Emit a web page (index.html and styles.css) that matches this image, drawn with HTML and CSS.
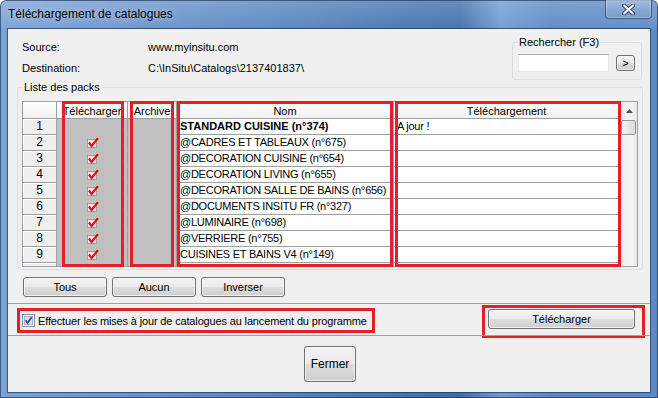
FILE: index.html
```html
<!DOCTYPE html>
<html lang="fr">
<head>
  <meta charset="UTF-8">
  <title>Téléchargement de catalogues</title>
  <link rel="stylesheet" href="styles.css">
</head>
<body>
  <div class="window">
    <div class="titlebar">
      <span class="title">Téléchargement de catalogues</span>
      <div class="close">
        <svg width="13" height="11" viewBox="0 0 13 11">
          <path d="M2 1.5 L11 9.5 M11 1.5 L2 9.5" stroke="#2b3f5c" stroke-width="4" stroke-linecap="round"/>
          <path d="M2 1.5 L11 9.5 M11 1.5 L2 9.5" stroke="#ffffff" stroke-width="2.2" stroke-linecap="round"/>
        </svg>
      </div>
    </div>

    <div class="client">
      <div class="top">
        <div class="info">
          <div class="info-row"><span class="label">Source:</span><span>www.myinsitu.com</span></div>
          <div class="info-row"><span class="label">Destination:</span><span>C:\InSitu\Catalogs\2137401837\</span></div>
        </div>
        <fieldset class="group search">
          <legend>Rechercher (F3)</legend>
          <input class="search-input" type="text">
          <button class="btn go">&gt;</button>
        </fieldset>
      </div>

      <fieldset class="group packs">
        <legend>Liste des packs</legend>
        <div class="grid-wrap">
          <div class="grid">
            <div class="cell head corner"></div>
            <div class="cell head">Télécharger</div>
            <div class="cell head">Archive</div>
            <div class="cell head">Nom</div>
            <div class="cell head">Téléchargement</div>

            <div class="cell rh">1</div>
            <div class="cell dl"></div>
            <div class="cell ar"></div>
            <div class="cell nm bold">STANDARD CUISINE (n°374)</div>
            <div class="cell st">A jour !</div>

            <div class="cell rh">2</div>
            <div class="cell dl"><svg class="tick" width="12" height="11" viewBox="0 0 12 11"><rect x="0.5" y="2.5" width="9" height="8" fill="#f2e6e6" stroke="#a89a9a"/><path d="M2 5.5 L4.6 9 L11 1.2" fill="none" stroke="#d4131b" stroke-width="2.2"/></svg></div>
            <div class="cell ar"></div>
            <div class="cell nm">@CADRES ET TABLEAUX (n°675)</div>
            <div class="cell st"></div>

            <div class="cell rh">3</div>
            <div class="cell dl"><svg class="tick" width="12" height="11" viewBox="0 0 12 11"><rect x="0.5" y="2.5" width="9" height="8" fill="#f2e6e6" stroke="#a89a9a"/><path d="M2 5.5 L4.6 9 L11 1.2" fill="none" stroke="#d4131b" stroke-width="2.2"/></svg></div>
            <div class="cell ar"></div>
            <div class="cell nm">@DECORATION CUISINE (n°654)</div>
            <div class="cell st"></div>

            <div class="cell rh">4</div>
            <div class="cell dl"><svg class="tick" width="12" height="11" viewBox="0 0 12 11"><rect x="0.5" y="2.5" width="9" height="8" fill="#f2e6e6" stroke="#a89a9a"/><path d="M2 5.5 L4.6 9 L11 1.2" fill="none" stroke="#d4131b" stroke-width="2.2"/></svg></div>
            <div class="cell ar"></div>
            <div class="cell nm">@DECORATION LIVING (n°655)</div>
            <div class="cell st"></div>

            <div class="cell rh">5</div>
            <div class="cell dl"><svg class="tick" width="12" height="11" viewBox="0 0 12 11"><rect x="0.5" y="2.5" width="9" height="8" fill="#f2e6e6" stroke="#a89a9a"/><path d="M2 5.5 L4.6 9 L11 1.2" fill="none" stroke="#d4131b" stroke-width="2.2"/></svg></div>
            <div class="cell ar"></div>
            <div class="cell nm">@DECORATION SALLE DE BAINS (n°656)</div>
            <div class="cell st"></div>

            <div class="cell rh">6</div>
            <div class="cell dl"><svg class="tick" width="12" height="11" viewBox="0 0 12 11"><rect x="0.5" y="2.5" width="9" height="8" fill="#f2e6e6" stroke="#a89a9a"/><path d="M2 5.5 L4.6 9 L11 1.2" fill="none" stroke="#d4131b" stroke-width="2.2"/></svg></div>
            <div class="cell ar"></div>
            <div class="cell nm">@DOCUMENTS INSITU FR (n°327)</div>
            <div class="cell st"></div>

            <div class="cell rh">7</div>
            <div class="cell dl"><svg class="tick" width="12" height="11" viewBox="0 0 12 11"><rect x="0.5" y="2.5" width="9" height="8" fill="#f2e6e6" stroke="#a89a9a"/><path d="M2 5.5 L4.6 9 L11 1.2" fill="none" stroke="#d4131b" stroke-width="2.2"/></svg></div>
            <div class="cell ar"></div>
            <div class="cell nm">@LUMINAIRE (n°698)</div>
            <div class="cell st"></div>

            <div class="cell rh">8</div>
            <div class="cell dl"><svg class="tick" width="12" height="11" viewBox="0 0 12 11"><rect x="0.5" y="2.5" width="9" height="8" fill="#f2e6e6" stroke="#a89a9a"/><path d="M2 5.5 L4.6 9 L11 1.2" fill="none" stroke="#d4131b" stroke-width="2.2"/></svg></div>
            <div class="cell ar"></div>
            <div class="cell nm">@VERRIERE (n°755)</div>
            <div class="cell st"></div>

            <div class="cell rh">9</div>
            <div class="cell dl"><svg class="tick" width="12" height="11" viewBox="0 0 12 11"><rect x="0.5" y="2.5" width="9" height="8" fill="#f2e6e6" stroke="#a89a9a"/><path d="M2 5.5 L4.6 9 L11 1.2" fill="none" stroke="#d4131b" stroke-width="2.2"/></svg></div>
            <div class="cell ar"></div>
            <div class="cell nm">CUISINES ET BAINS V4 (n°149)</div>
            <div class="cell st"></div>

            <div class="cell rh"></div>
            <div class="cell dl"></div>
            <div class="cell ar"></div>
            <div class="cell nm"></div>
            <div class="cell st"></div>
          </div>
          <div class="scrollbar">
            <div class="sb-up">
              <svg width="7" height="4" viewBox="0 0 7 4"><path d="M0 4 L3.5 0 L7 4 Z" fill="#555"/></svg>
            </div>
            <div class="sb-thumb"></div>
          </div>

          <!-- red annotation frames -->
          <div class="mark col-dl"></div>
          <div class="mark col-ar"></div>
          <div class="mark col-nm"></div>
          <div class="mark col-st"></div>
        </div>
      </fieldset>

      <div class="actions">
        <button class="btn sel">Tous</button>
        <button class="btn sel">Aucun</button>
        <button class="btn sel">Inverser</button>
      </div>

      <div class="panel">
        <label class="frame auto-update">
          <svg class="checkbox" width="13" height="13" viewBox="0 0 13 13">
            <rect x="0.5" y="0.5" width="12" height="12" fill="#f6f6f6" stroke="#8e8f8f"/>
            <rect x="2.5" y="2.5" width="8" height="8" fill="#dbe6f3" stroke="#a4b3c8"/>
            <path d="M3.5 6.3 L5.6 9 L9.6 3.3" fill="none" stroke="#2d4a86" stroke-width="1.7"/>
          </svg>
          <span>Effectuer les mises à jour de catalogues au lancement du programme</span>
        </label>
        <div class="frame download">
          <button class="btn wide">Télécharger</button>
        </div>
      </div>

      <div class="footer">
        <button class="btn closing">Fermer</button>
      </div>
    </div>
  </div>
</body>
</html>
```

FILE: styles.css
```css
* {
  box-sizing: border-box;
}

body {
  margin: 0;
  background: #ffffff;
  font-family: "Liberation Sans", Arial, sans-serif;
  font-size: 11px;
  color: #000000;
}

.window {
  width: 658px;
  height: 398px;
  display: flex;
  flex-direction: column;
  border-radius: 6px 6px 0 0;
  overflow: hidden;
  background:
    linear-gradient(180deg, rgba(255, 255, 255, 0.22) 0, rgba(255, 255, 255, 0.06) 28px, rgba(255, 255, 255, 0) 29px),
    linear-gradient(90deg, #7aa2d6 0%, #6b95cc 18%, #5886c1 40%, #4472ae 62%, #3f6da9 70%, #6d9ad0 76%, #5a88c3 84%, #5d8ac4 100%);
  box-shadow: inset 0 0 0 1px rgba(20, 40, 70, 0.6);
}

.titlebar {
  height: 29px;
  display: flex;
  align-items: flex-start;
  padding-left: 8px;
}

.title {
  font-size: 12px;
  line-height: 29px;
  text-shadow: 0 0 6px rgba(255, 255, 255, 0.6);
}

.close {
  margin-left: auto;
  margin-right: 6px;
  width: 47px;
  height: 19px;
  display: flex;
  align-items: center;
  justify-content: center;
  border: 1px solid rgba(25, 45, 75, 0.65);
  border-top: none;
  border-radius: 0 0 4px 4px;
  background: linear-gradient(180deg, rgba(255, 255, 255, 0.3), rgba(255, 255, 255, 0.12) 50%, rgba(255, 255, 255, 0.05));
  box-shadow: inset 0 0 0 1px rgba(255, 255, 255, 0.3);
}

.client {
  flex: 1;
  margin: 0 8px 6px 8px;
  background: #f0f0f0;
  display: flex;
  flex-direction: column;
  box-shadow: 0 0 0 1px rgba(30, 55, 90, 0.7);
}

/* top: source / destination + search */
.top {
  height: 52px;
  display: flex;
  align-items: flex-start;
}

.info {
  padding: 8px 0 0 14px;
}

.info-row {
  display: flex;
  height: 21px;
  line-height: 21px;
}

.label {
  width: 126px;
}

.group {
  margin: 0;
  border: 1px solid #d5dfe5;
  border-radius: 3px;
  min-width: 0;
}

.group legend {
  padding: 0 1px;
  line-height: 13px;
  font-size: 11px;
}

.search {
  margin: 7px 8px 0 auto;
  width: 130px;
  padding: 5px 6px 7px 5px;
  display: flex;
  align-items: center;
}

.search-input {
  width: 91px;
  height: 18px;
  margin: 0;
  border: 1px solid #e3e9ef;
  border-top-color: #abadb3;
  background: #ffffff;
  padding: 0;
}

.btn {
  font-family: "Liberation Sans", Arial, sans-serif;
  font-size: 11px;
  color: #000000;
  padding: 0;
  border: 1px solid #707070;
  border-radius: 3px;
  background: linear-gradient(180deg, #f2f2f2 0%, #ebebeb 49%, #dddddd 50%, #cfcfcf 100%);
  box-shadow: inset 0 0 0 1px rgba(255, 255, 255, 0.65);
}

.go {
  width: 19px;
  height: 16px;
  margin-left: 7px;
  line-height: 12px;
}

/* packs list */
.packs {
  margin: 0 7px 0 9px;
  padding: 7px 4px 2px 4px;
}

.packs legend {
  padding: 0 2px;
}

.grid-wrap {
  position: relative;
  display: flex;
  width: 616px;
  height: 166px;
  border: 1px solid #a0a0a0;
  background: #ababab;
}

.grid {
  display: grid;
  grid-template-columns: 34px 71px 49px 217px 226px;
  grid-auto-rows: 16px;
  grid-template-rows: 17px;
  height: 164px;
  overflow: hidden;
}

.cell {
  border-right: 1px solid #a0a0a0;
  border-bottom: 1px solid #a0a0a0;
  line-height: 15px;
  white-space: nowrap;
  overflow: hidden;
}

.head {
  background: linear-gradient(180deg, #ffffff, #f2f2f2);
  text-align: center;
  line-height: 18px;
}

.rh {
  background: #f0f0f0;
  text-align: center;
  font-size: 12px;
  box-shadow: inset 1px 1px 0 #ffffff;
}

.dl,
.ar {
  background: #c0c0c0;
  border-bottom-color: #c0c0c0;
}

.dl {
  display: flex;
  align-items: center;
  justify-content: center;
}

.tick {
  margin-left: 2px;
}

.nm,
.st {
  background: #ffffff;
  padding-left: 3px;
  letter-spacing: -0.25px;
}

.nm.bold {
  font-weight: bold;
  letter-spacing: 0;
}

.st {
  border-right: none;
}

.scrollbar {
  width: 17px;
  display: flex;
  flex-direction: column;
  border-left: 1px solid #e6e6e6;
  background: linear-gradient(90deg, #e4e4e4, #f3f3f3 25%, #f3f3f3 75%, #e4e4e4);
}

.sb-up {
  height: 17px;
  display: flex;
  align-items: center;
  justify-content: center;
}

.sb-thumb {
  height: 15px;
  margin: 1px 1px 0 0;
  border: 1px solid #979797;
  border-radius: 2px;
  background: linear-gradient(90deg, #f5f5f5, #e6e6e6 50%, #d9d9d9);
}

.mark {
  position: absolute;
  top: -1px;
  height: 166px;
  border: 3px solid #e3202a;
}

.col-dl {
  left: 39px;
  width: 62px;
}

.col-ar {
  left: 107px;
  width: 44px;
}

.col-nm {
  left: 154px;
  width: 216px;
}

.col-st {
  left: 372px;
  width: 226px;
}

/* select buttons */
.actions {
  display: flex;
  gap: 5px;
  margin: 7px 0 6px 15px;
}

.sel {
  width: 84px;
  height: 20px;
}

/* auto update + download */
.panel {
  height: 32px;
  display: flex;
  align-items: flex-start;
  border-top: 1px solid #a0a0a0;
}

.frame {
  border: 3px solid #e3202a;
}

.auto-update {
  display: flex;
  align-items: center;
  gap: 3px;
  width: 358px;
  height: 25px;
  margin: 4px 0 0 9px;
  padding-left: 2px;
  letter-spacing: -0.15px;
}

.download {
  width: 163px;
  height: 33px;
  margin: 1px 5px 0 auto;
  padding: 1px 7px 0 3px;
}

.wide {
  width: 147px;
  height: 20px;
}

.footer {
  flex: 1;
  display: flex;
  justify-content: center;
  padding-top: 10px;
  border-top: 1px solid #a0a0a0;
}

.closing {
  width: 52px;
  height: 36px;
  margin-left: 2px;
  font-size: 12px;
}
```
